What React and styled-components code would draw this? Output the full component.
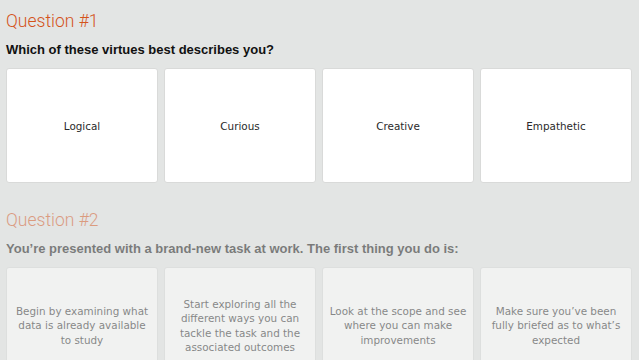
import React from "react";
import styled, { createGlobalStyle } from "styled-components";

const GlobalStyle = createGlobalStyle`
  body {
    margin: 0;
    background-color: #e3e5e4;
    font-family: "Liberation Sans", Arial, sans-serif;
  }
`;

const Page = styled.div`
  padding: 6px 7px 0 6px;
`;

const Section = styled.section`
  opacity: ${(props) => (props.faded ? 0.5 : 1)};
  margin-bottom: 25px;
`;

const Heading = styled.h2`
  font-family: "Roboto", "Liberation Sans", sans-serif;
  font-weight: 300;
  font-size: 17.5px;
  line-height: 24px;
  color: #d4531b;
  margin: 3px 0 9px 0;
`;

const Prompt = styled.h3`
  font-size: 13px;
  font-weight: bold;
  color: #111;
  line-height: 16px;
  margin: 0 0 10px 0;
`;

const Options = styled.div`
  display: grid;
  grid-template-columns: repeat(4, 1fr);
  gap: 6px;
`;

const Option = styled.div`
  height: 115px;
  box-sizing: border-box;
  background-color: #fff;
  border: 1px solid #d9dad9;
  border-radius: 3px;
  display: flex;
  align-items: center;
  justify-content: center;
  text-align: center;
  padding: 2px 5px 0 5px;
  font-family: "DejaVu Sans", Verdana, sans-serif;
  font-size: 10.4px;
  line-height: 14.5px;
  color: #2a2a2a;
`;

const questions = [
  {
    title: "Question #1",
    prompt: "Which of these virtues best describes you?",
    options: ["Logical", "Curious", "Creative", "Empathetic"],
  },
  {
    title: "Question #2",
    prompt:
      "You\u2019re presented with a brand-new task at work. The first thing you do is:",
    options: [
      "Begin by examining what data is already available to study",
      "Start exploring all the different ways you can tackle the task and the associated outcomes",
      "Look at the scope and see where you can make improvements",
      "Make sure you\u2019ve been fully briefed as to what\u2019s expected",
    ],
  },
];

const App = () => {
  return (
    <>
      <GlobalStyle />
      <Page>
        {questions.map((q, index) => (
          <Section key={q.title} faded={index > 0}>
            <Heading>{q.title}</Heading>
            <Prompt>{q.prompt}</Prompt>
            <Options>
              {q.options.map((option) => (
                <Option key={option}>{option}</Option>
              ))}
            </Options>
          </Section>
        ))}
      </Page>
    </>
  );
};

export default App;
